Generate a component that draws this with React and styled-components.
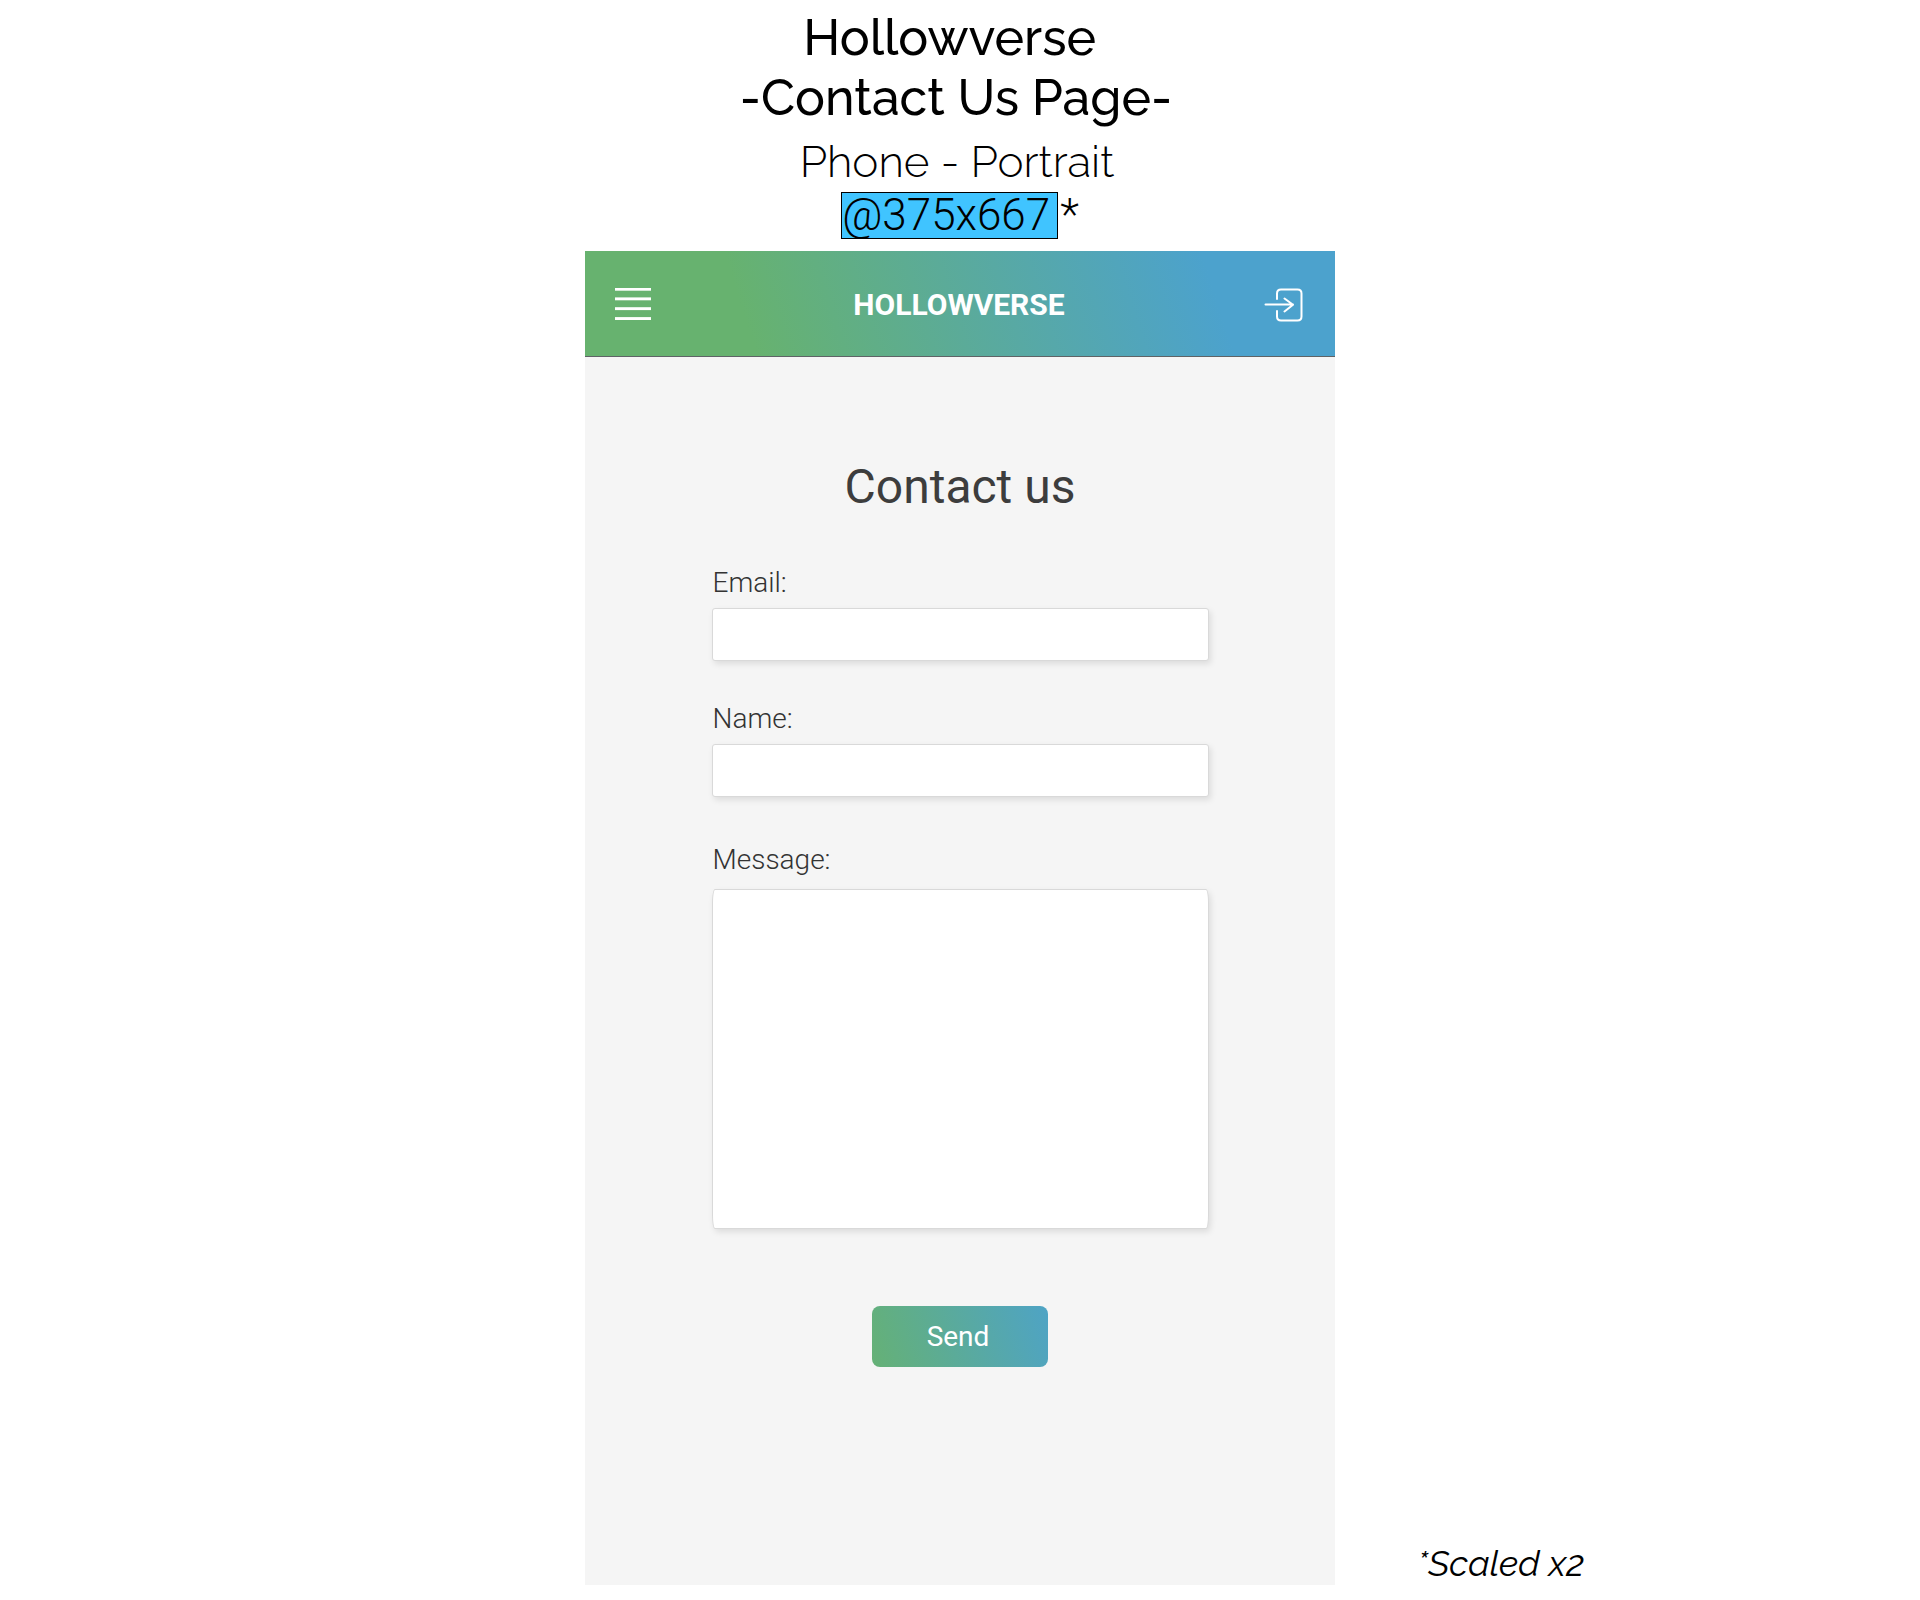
import React from "react";
import styled, { createGlobalStyle } from "styled-components";

const GREEN = "#67b26f";
const BLUE = "#4ca2cd";
const DISPLAY = 'Raleway, Lato, "Open Sans", sans-serif';
const BODY = 'Roboto, "Liberation Sans", sans-serif';

const GlobalStyle = createGlobalStyle`
  *, *::before, *::after { box-sizing: border-box; }
  body { margin: 0; background: #fff; color: #000; font-family: ${BODY}; }
`;

const Page = styled.div`
  display: flex;
  flex-direction: column;
  padding: 8px 0 15px;
`;

const Caption = styled.header`
  display: flex;
  flex-direction: column;
  align-items: center;
  font-family: ${DISPLAY};
  text-align: center;
`;

const CaptionTitle = styled.h1`
  margin: 0;
  padding-right: 8px;
  font-size: 50px;
  font-weight: 500;
  line-height: 60px;
`;

const CaptionDevice = styled.p`
  margin: 6px 0 0;
  padding-right: 6px;
  font-size: 44px;
  font-weight: 300;
  line-height: 56px;
`;

const CaptionSize = styled.p`
  display: flex;
  margin: 2px 0 12px;
  font-family: ${BODY};
  font-size: 44px;
  font-weight: 300;
  line-height: 47px;
`;

const SizeChip = styled.span`
  height: 47px;
  margin-right: 2px;
  padding: 0 7px 0 0;
  border: 1px solid #000;
  background: #40c4ff;
  line-height: 45px;
`;

const Board = styled.div`
  display: grid;
  grid-template-columns: 1fr minmax(0, 750px) 1fr;
`;

const Phone = styled.main`
  grid-column: 2;
  background: #f5f5f5;
`;

const Note = styled.aside`
  align-self: end;
  margin-left: 82px;
  font-family: ${DISPLAY};
  font-size: 36px;
  font-style: italic;
  font-weight: 400;
  line-height: 44px;
`;

const AppBar = styled.header`
  display: grid;
  grid-template-columns: 1fr auto 1fr;
  align-items: center;
  height: 106px;
  padding: 2px 32px 0 30px;
  border-bottom: 1px solid #5f6366;
  background: linear-gradient(72deg, ${GREEN} 22%, ${BLUE} 83%);
  color: #fff;
`;

const Brand = styled.span`
  font-size: 30px;
  font-weight: 700;
  line-height: 36px;
`;

const IconButton = styled.button`
  display: flex;
  justify-self: ${(p) => p.$side};
  padding: 0;
  border: 0;
  background: none;
  color: inherit;
  cursor: pointer;
`;

const Form = styled.form`
  display: flex;
  flex-direction: column;
  max-width: 497px;
  margin: 0 auto;
  padding: 101px 0 218px;
`;

const Heading = styled.h2`
  margin: 0 0 51px;
  color: #3d3d3d;
  font-size: 48px;
  font-weight: 400;
  line-height: 57px;
  text-align: center;
`;

const Field = styled.div`
  display: flex;
  flex-direction: column;
  gap: ${(p) => (p.$tall ? 13 : 9)}px;
  margin-bottom: ${(p) => p.$after}px;
`;

const Label = styled.label`
  padding-left: 1px;
  color: #333;
  font-size: 28px;
  font-weight: 300;
  line-height: 33px;
`;

const TextInput = styled.input`
  width: 100%;
  height: 53px;
  padding: 0 12px;
  border: 1px solid #d9d9d9;
  border-radius: 3px;
  background: #fff;
  box-shadow: 2px 3px 6px rgba(0, 0, 0, 0.1);
  font: 300 28px ${BODY};
`;

const TextArea = styled(TextInput).attrs({ as: "textarea" })`
  height: 340px;
  padding: 12px;
  border-radius: 3px / 14px;
  resize: none;
`;

const SendButton = styled.button`
  align-self: center;
  width: 176px;
  height: 61px;
  padding: 0 4px 0 0;
  border: 0;
  border-radius: 8px;
  background: linear-gradient(72deg, ${GREEN} -8%, ${BLUE} 110%);
  color: #fff;
  font: 400 28px ${BODY};
  cursor: pointer;
`;

const MenuIcon = () => (
  <svg width="36" height="33" viewBox="0 0 36 33" fill="currentColor" aria-hidden="true">
    <rect y="0" width="36" height="2.7" />
    <rect y="9.4" width="36" height="2.9" />
    <rect y="19.2" width="36" height="2.9" />
    <rect y="29.1" width="36" height="2.9" />
  </svg>
);

const LoginIcon = () => (
  <svg width="39" height="34" viewBox="0 0 39 34" fill="none" stroke="currentColor" strokeWidth="2" strokeLinecap="round" strokeLinejoin="round" aria-hidden="true">
    <path d="M13 11V5.500Q13 1.500 17 1.500H33.500Q37.500 1.500 37.500 5.500V28.500Q37.500 32.500 33.500 32.500H17Q13 32.500 13 28.500V23" />
    <path d="M1.500 16.500H29M20.500 10.500L29 16.800L20.500 23.500" />
  </svg>
);

export default function App() {
  return (
    <>
      <GlobalStyle />
      <Page>
        <Caption>
          <CaptionTitle>
            Hollowverse{"\u00a0"}
            <br />
            -Contact Us Page-
          </CaptionTitle>
          <CaptionDevice>Phone - Portrait</CaptionDevice>
          <CaptionSize>
            <SizeChip>@375x667</SizeChip>*
          </CaptionSize>
        </Caption>
        <Board>
          <Phone>
            <AppBar>
              <IconButton type="button" $side="start" aria-label="Menu">
                <MenuIcon />
              </IconButton>
              <Brand>HOLLOWVERSE</Brand>
              <IconButton type="button" $side="end" aria-label="Log in">
                <LoginIcon />
              </IconButton>
            </AppBar>
            <Form onSubmit={(e) => e.preventDefault()}>
              <Heading>Contact us</Heading>
              <Field $after={41}>
                <Label htmlFor="email">Email:</Label>
                <TextInput id="email" type="email" />
              </Field>
              <Field $after={46}>
                <Label htmlFor="name">Name:</Label>
                <TextInput id="name" type="text" />
              </Field>
              <Field $tall $after={77}>
                <Label htmlFor="message">Message:</Label>
                <TextArea id="message" />
              </Field>
              <SendButton type="submit">Send</SendButton>
            </Form>
          </Phone>
          <Note>*Scaled x2</Note>
        </Board>
      </Page>
    </>
  );
}
